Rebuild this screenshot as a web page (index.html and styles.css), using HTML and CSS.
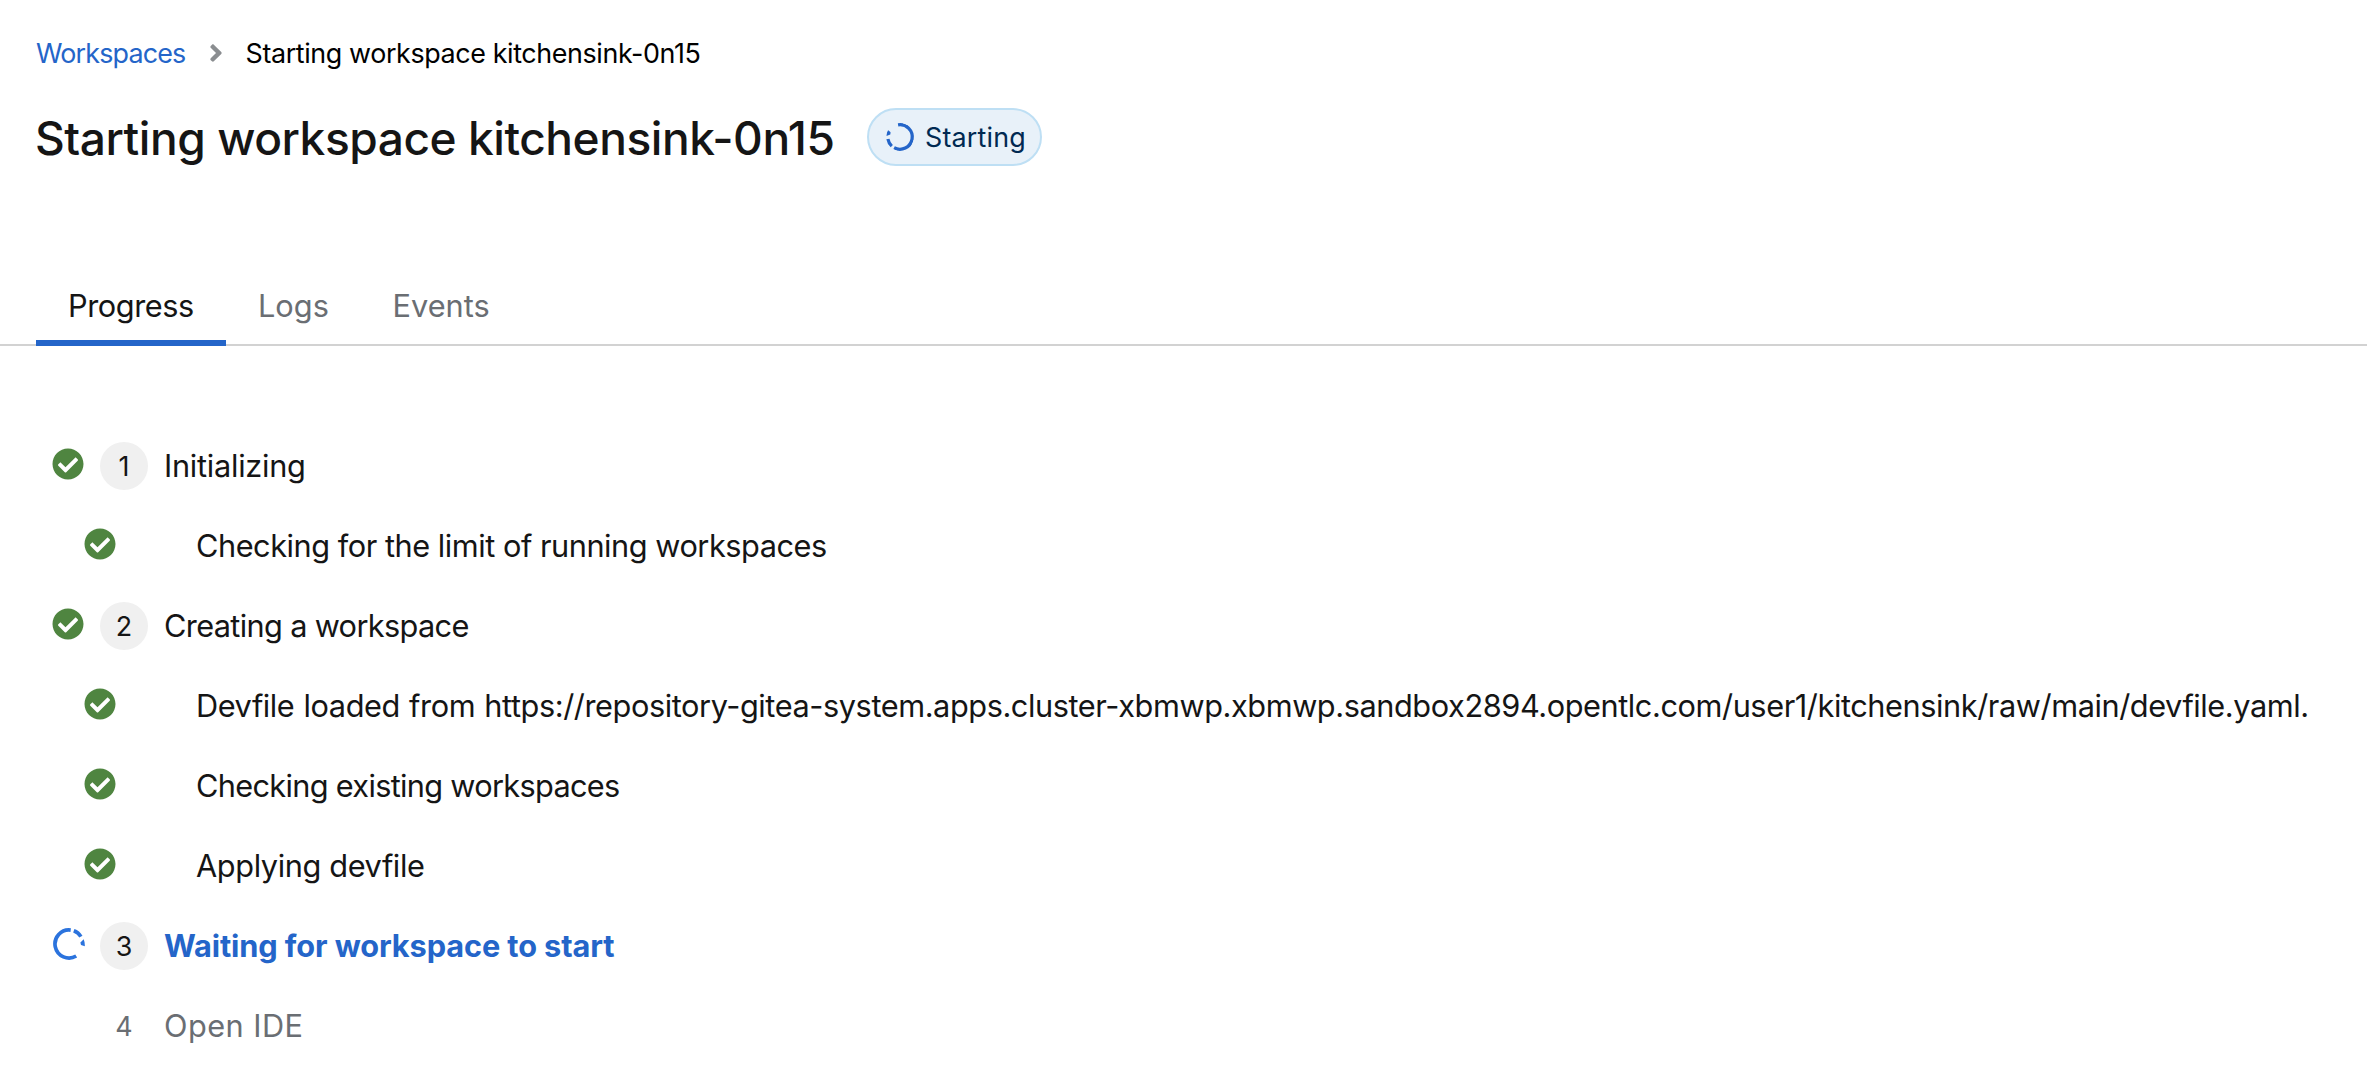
FILE: index.html
```html
<!DOCTYPE html>
<html lang="en">
<head>
<meta charset="utf-8">
<title>Starting workspace kitchensink-0n15</title>
<link rel="stylesheet" href="styles.css">
</head>
<body>
<svg class="sprite" aria-hidden="true">
  <symbol id="check" viewBox="0 0 512 512">
    <path fill="currentColor" d="M504 256c0 136.967-111.033 248-248 248S8 392.967 8 256 119.033 8 256 8s248 111.033 248 248zM227.314 387.314l184-184c6.248-6.248 6.248-16.379 0-22.627l-22.627-22.627c-6.248-6.249-16.379-6.249-22.628 0L216 308.118l-70.059-70.059c-6.248-6.248-16.379-6.248-22.628 0l-22.627 22.627c-6.248 6.248-6.248 16.379 0 22.627l104 104c6.249 6.249 16.379 6.249 22.628.001z"/>
  </symbol>
  <symbol id="spinner" viewBox="0 0 32 32">
    <path fill="none" stroke="currentColor" stroke-width="3.7" d="M23.2 28A14 14 0 1 1 17.7 2.1M20.8 2.8A14 14 0 0 1 27.9 8.6"/>
    <path fill="currentColor" d="M30.7 11.2L27.4 14.6L28 17L31.8 18.2A16 16 0 0 0 30.7 11.2Z"/>
  </symbol>
</svg>

<header class="header">
  <nav class="breadcrumb" aria-label="Breadcrumb">
    <a class="breadcrumb-link">Workspaces</a>
    <svg class="breadcrumb-divider" viewBox="0 0 256 512"><path fill="currentColor" d="M224.3 273l-136 136c-9.4 9.4-24.6 9.4-33.9 0l-22.6-22.6c-9.4-9.4-9.4-24.6 0-33.9l96.4-96.4-96.4-96.4c-9.4-9.4-9.4-24.6 0-33.9L54.3 103c9.4-9.4 24.6-9.4 33.9 0l136 136c9.5 9.4 9.5 24.6.1 34z"/></svg>
    <span class="breadcrumb-current">Starting workspace kitchensink-0n15</span>
  </nav>
  <div class="title-row">
    <h1 class="title">Starting workspace kitchensink-0n15</h1>
    <span class="badge"><svg class="badge-icon"><use href="#spinner"/></svg>Starting</span>
  </div>
</header>

<div class="tabs" role="tablist">
  <div class="tab tab-active" role="tab">Progress</div>
  <div class="tab tab-logs" role="tab">Logs</div>
  <div class="tab tab-events" role="tab">Events</div>
</div>

<main class="steps">
  <div class="step"><svg class="step-icon"><use href="#check"/></svg><span class="step-number">1</span><span class="label label-init">Initializing</span></div>
  <div class="step substep"><svg class="step-icon"><use href="#check"/></svg><span class="label label-limit">Checking for the limit of running workspaces</span></div>
  <div class="step"><svg class="step-icon"><use href="#check"/></svg><span class="step-number">2</span><span class="label label-create">Creating a workspace</span></div>
  <div class="step substep"><svg class="step-icon"><use href="#check"/></svg><span class="label label-devfile">Devfile loaded from https://repository-gitea-system.apps.cluster-xbmwp.xbmwp.sandbox2894.opentlc.com/user1/kitchensink/raw/main/devfile.yaml.</span></div>
  <div class="step substep"><svg class="step-icon"><use href="#check"/></svg><span class="label label-existing">Checking existing workspaces</span></div>
  <div class="step substep"><svg class="step-icon"><use href="#check"/></svg><span class="label label-apply">Applying devfile</span></div>
  <div class="step step-current"><svg class="step-icon"><use href="#spinner"/></svg><span class="step-number">3</span><span class="label label-wait">Waiting for workspace to start</span></div>
  <div class="step step-pending"><span class="step-icon"></span><span class="step-number">4</span><span class="label label-open">Open IDE</span></div>
</main>
</body>
</html>
```
FILE: styles.css
```css
* { box-sizing: border-box; }

body {
  margin: 0;
  background: #fff;
  color: #151515;
  font-family: Inter, "Liberation Sans", sans-serif;
  font-size: 30.72px;
  white-space: nowrap;
}

.sprite { display: none; }

.header { padding: 33px 36px 0; }

.breadcrumb {
  display: flex;
  align-items: center;
  height: 40px;
  font-size: 26.88px;
  line-height: 40px;
}
.breadcrumb-link { width: 172.6px; color: #2465c9; letter-spacing: -0.83px; }
.breadcrumb-divider { width: 14px; height: 28px; color: #8a8d90; }
.breadcrumb-current { margin-left: 23px; color: #000; letter-spacing: -0.39px; }

.title-row { display: flex; margin-top: 35px; height: 58px; }
.title {
  width: 832px;
  margin: 3px 0 0 -1px;
  font-size: 46.08px;
  font-weight: 500;
  line-height: 54px;
  letter-spacing: -0.46px;
}

.badge {
  display: flex;
  align-items: center;
  gap: 11px;
  width: 175px;
  height: 58px;
  padding-left: 17px;
  border: 2px solid #bedff4;
  border-radius: 29px;
  background: #e8f1f9;
  color: #002952;
  font-size: 26.88px;
  letter-spacing: 0.2px;
}
.badge-icon { width: 28px; height: 28px; color: #2465c9; transform: rotate(202deg); }

.tabs {
  display: flex;
  margin-top: 99px;
  height: 81px;
  padding-left: 36px;
  line-height: 81px;
  color: #6a6e73;
  box-shadow: inset 0 -2px #d2d2d2;
}
.tab { padding: 0 32px; }
.tab-active { width: 190px; color: #151515; letter-spacing: -0.44px; box-shadow: inset 0 -6px #2465c9; }
.tab-logs { width: 134.5px; }
.tab-events { letter-spacing: 0; }

.steps { padding: 80px 0 0 52px; }
.step { display: flex; align-items: center; height: 80px; }
.substep { padding-left: 32px; }
.step-icon { flex: none; width: 32px; height: 32px; margin-bottom: 4px; color: #4f8540; }
.step-number {
  width: 48px;
  height: 48px;
  margin-left: 16px;
  border-radius: 50%;
  background: #f0f0f0;
  font-size: 26.88px;
  line-height: 48px;
  text-align: center;
}
.label { margin: 0 0 2px 16px; }
.substep .label { margin-left: 80px; }
.step-current .step-icon { margin-left: 1px; color: #2b73dd; }
.step-current .step-number { margin-left: 15px; }
.step-current .label { color: #2465c9; font-weight: 700; }
.step-pending, .step-pending .step-number { color: #6a6e73; }
.step-pending .step-number { background: none; }

/* Tracking for each message */
.label-init { letter-spacing: -0.27px; }
.label-limit { letter-spacing: -0.47px; }
.label-create { letter-spacing: -0.66px; }
.label-devfile { letter-spacing: -0.43px; word-spacing: 1px; }
.label-existing { letter-spacing: -0.69px; }
.label-apply { letter-spacing: -0.39px; }
.label-wait { letter-spacing: -0.1px; }
.label-open { letter-spacing: 0.45px; }
```
